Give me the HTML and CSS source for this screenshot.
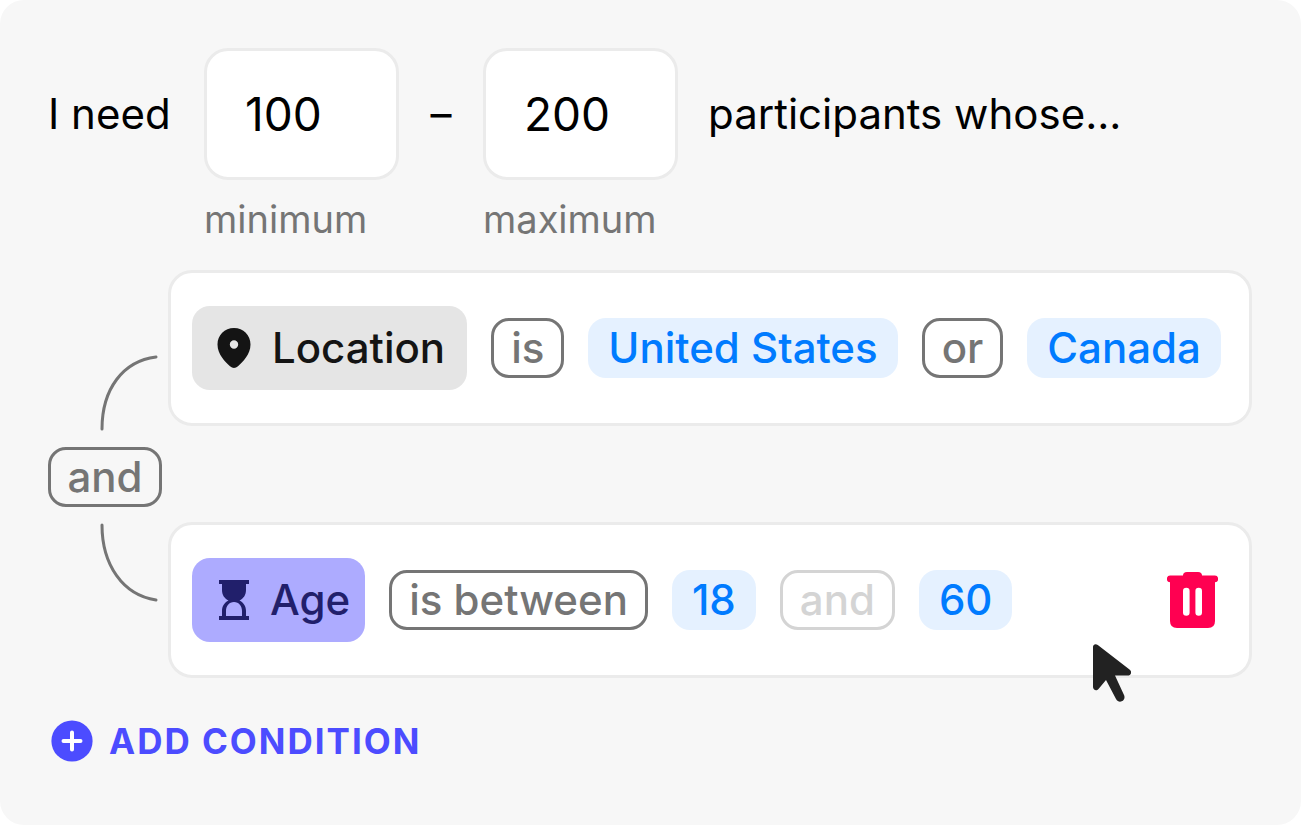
FILE: index.html
```html
<!DOCTYPE html>
<html lang="en">
<head>
<meta charset="utf-8">
<meta name="viewport" content="width=device-width, initial-scale=1">
<title>Participants</title>
<link rel="stylesheet" href="styles.css">
</head>
<body>
<main class="panel">
  <div class="quota">
    <span class="quota-text">I need</span>
    <input class="quota-input" id="min" type="text" inputmode="numeric" value="100">
    <span class="quota-text quota-dash">–</span>
    <input class="quota-input" id="max" type="text" inputmode="numeric" value="200">
    <span class="quota-text">participants whose...</span>
    <label class="quota-label quota-label-min" for="min">minimum</label>
    <label class="quota-label quota-label-max" for="max">maximum</label>
  </div>

  <section class="conditions">
    <div class="joiner">
      <svg class="arc" viewBox="0 0 114 78" aria-hidden="true"><path d="M54 75C54 35 75 7 108 3"/></svg>
      <button class="chip operator" type="button">and</button>
      <svg class="arc" viewBox="0 0 114 80" aria-hidden="true"><path d="M54 3C54 43 75 73 108 78"/></svg>
    </div>
    <div class="rows">
      <div class="condition">
        <button class="subject" type="button">
          <svg class="subject-icon" viewBox="0 0 34 40" aria-hidden="true"><path fill="currentColor" fill-rule="evenodd" d="M17 0C7.500 0 .5 7.200.5 16.500C.5 26.500 8.500 34 13 38.300Q17 41.700 21 38.300C25.500 34 33.500 26.500 33.500 16.500C33.500 7.200 26.500 0 17 0ZM17 12.300a4.200 4.200 0 1 1 0 8.400a4.200 4.200 0 0 1 0-8.400Z"/></svg>
          Location
        </button>
        <button class="chip operator" type="button">is</button>
        <button class="chip value" type="button">United States</button>
        <button class="chip operator" type="button">or</button>
        <button class="chip value" type="button">Canada</button>
      </div>
      <div class="condition">
        <button class="subject subject-age" type="button">
          <svg class="subject-icon" viewBox="0 0 34 40" aria-hidden="true"><path fill="currentColor" fill-rule="evenodd" d="M2 0H32V4H29V10C29 15 26.500 18.500 22.500 20.500C26.500 22.500 29 26 29 31V36H32V40H2V36H5V31C5 26 7.500 22.500 11.500 20.500C7.500 18.500 5 15 5 10V4H2ZM9 36H25V31C25 26 22 22 17 22C12 22 9 26 9 31Z"/></svg>
          Age
        </button>
        <button class="chip operator" type="button">is between</button>
        <button class="chip value" type="button">18</button>
        <button class="chip operator operator-fixed" type="button">and</button>
        <button class="chip value" type="button">60</button>
        <button class="remove" type="button" aria-label="Remove condition">
          <svg class="remove-icon" viewBox="0 0 51 56" aria-hidden="true"><path fill="currentColor" fill-rule="evenodd" d="M20 0H31Q35 0 35 3.500H47.500A3.400 3.400 0 0 1 48 10.300V49Q48 56 41 56H10Q3 56 3 49V10.300A3.400 3.400 0 0 1 3.500 3.500H16Q16 0 20 0ZM16 19V40.500a3.300 3.300 0 0 0 6.600 0V19a3.300 3.300 0 0 0-6.600 0ZM28.400 19V40.500a3.300 3.300 0 0 0 6.600 0V19a3.300 3.300 0 0 0-6.600 0Z"/></svg>
        </button>
        <svg class="pointer" viewBox="0 0 39 58" aria-hidden="true"><path fill="#222" d="M1 3C1 .5 3.500-.8 5.800 1L37.500 25.500C40.500 27.800 39 31.500 35.500 31.500H23L32 51C34.500 56.500 27 60.500 24 55L14 36L6.500 45C4.500 47.500 1 46 1 43Z"/></svg>
      </div>
    </div>
  </section>

  <button class="add" type="button">
    <svg class="add-icon" viewBox="0 0 42 42" aria-hidden="true"><circle cx="21" cy="21" r="20.600" fill="currentColor"/><path d="M21 12.500V29.500M12.500 21H29.500" stroke="#fff" stroke-width="4" stroke-linecap="round"/></svg>
    ADD CONDITION
  </button>
</main>
</body>
</html>
```
FILE: styles.css
```css
* {
  box-sizing: border-box;
}

body {
  margin: 0;
  background: #fff;
  font-family: Inter, "Liberation Sans", sans-serif;
  font-size: 42px;
  line-height: 48px;
  color: #000;
}

button,
input {
  margin: 0;
  font: inherit;
}

button {
  border: 0;
  background: none;
  cursor: pointer;
}

.panel {
  min-height: 100vh;
  padding: 48px 49px 48px 48px;
  border-radius: 24px;
  background: #f7f7f7;
}

.quota {
  display: grid;
  grid-template-columns: 126px 195px 24px 195px auto;
  justify-content: start;
  align-items: center;
  column-gap: 30px;
  row-gap: 15px;
}

.quota-text {
  white-space: nowrap;
}

.quota-dash {
  text-align: center;
}

.quota-input {
  width: 100%;
  height: 132px;
  padding: 0 38px;
  border: 3px solid #ebebeb;
  border-radius: 24px;
  background: #fff;
  color: #000;
  font-size: 46px;
}

.quota-label {
  color: #757575;
  font-size: 38px;
}

.quota-label-min {
  grid-column: 2;
}

.quota-label-max {
  grid-column: 4;
}

.conditions {
  display: grid;
  grid-template-columns: 114px 1fr;
  column-gap: 6px;
  margin-top: 27px;
  font-weight: 500;
}

.joiner {
  display: flex;
  flex-direction: column;
  justify-content: center;
  gap: 15px;
  padding-top: 8px;
}

.arc {
  width: 114px;
  fill: none;
  stroke: #757575;
  stroke-width: 3;
  stroke-linecap: round;
}

.rows {
  display: grid;
  gap: 96px;
}

.condition {
  position: relative;
  display: flex;
  align-items: center;
  gap: 24px;
  min-height: 156px;
  padding: 0 21px;
  border: 3px solid #ebebeb;
  border-radius: 24px;
  background: #fff;
}

.subject {
  display: flex;
  align-items: center;
  gap: 21px;
  height: 84px;
  padding: 0 22px 0 25px;
  border-radius: 18px;
  background: #e5e5e5;
  color: #141414;
}

.subject-age {
  gap: 19px;
  padding-right: 15px;
  background: #adabff;
  color: #211f6b;
}

.subject-icon {
  width: 34px;
  height: 40px;
}

.chip {
  height: 60px;
  padding: 0 17px;
  border: 3px solid transparent;
  border-radius: 18px;
  line-height: 54px;
  white-space: nowrap;
}

.operator {
  border-color: #757575;
  color: #757575;
}

.joiner .operator {
  padding: 0;
}

.operator-fixed {
  border-color: #d4d4d4;
  color: #d4d4d4;
}

.value {
  background: #e5f1ff;
  color: #007bff;
}

.remove {
  display: flex;
  margin-left: auto;
  padding: 0 10px;
  color: #ff0051;
}

.remove-icon {
  width: 51px;
  height: 56px;
}

.pointer {
  position: absolute;
  right: 118px;
  bottom: -27px;
  width: 39px;
  height: 58px;
}

.add {
  display: flex;
  align-items: center;
  gap: 16px;
  margin-top: 39px;
  padding: 0 3px;
  color: #4c4cff;
  font-size: 35px;
  font-weight: 700;
  letter-spacing: 2px;
}

.add-icon {
  width: 42px;
  height: 42px;
}
```
